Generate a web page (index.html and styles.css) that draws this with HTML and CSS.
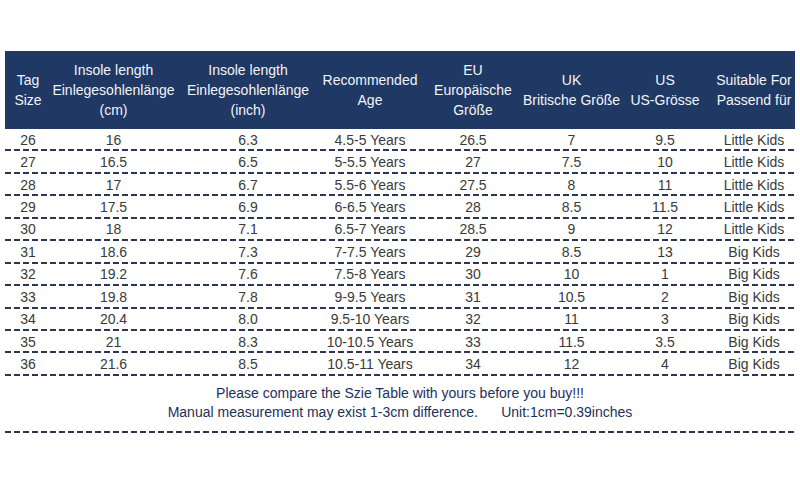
FILE: index.html
```html
<!DOCTYPE html>
<html>
<head>
<meta charset="utf-8">
<link rel="stylesheet" href="styles.css">
</head>
<body>
<div class="page">
  <div class="chart">
    <div class="row head">
      <div>Tag<br>Size</div>
      <div>Insole length<br>Einlegesohlenlänge<br>(cm)</div>
      <div>Insole length<br>Einlegesohlenlänge<br>(inch)</div>
      <div>Recommended<br>Age</div>
      <div>EU<br>Europäische<br>Größe</div>
      <div>UK<br>Britische Größe</div>
      <div>US<br>US-Grösse</div>
      <div>Suitable For<br>Passend für</div>
    </div>
    <div class="row"><div>26</div><div>16</div><div>6.3</div><div>4.5-5 Years</div><div>26.5</div><div>7</div><div>9.5</div><div>Little Kids</div></div>
    <div class="row"><div>27</div><div>16.5</div><div>6.5</div><div>5-5.5 Years</div><div>27</div><div>7.5</div><div>10</div><div>Little Kids</div></div>
    <div class="row"><div>28</div><div>17</div><div>6.7</div><div>5.5-6 Years</div><div>27.5</div><div>8</div><div>11</div><div>Little Kids</div></div>
    <div class="row"><div>29</div><div>17.5</div><div>6.9</div><div>6-6.5 Years</div><div>28</div><div>8.5</div><div>11.5</div><div>Little Kids</div></div>
    <div class="row"><div>30</div><div>18</div><div>7.1</div><div>6.5-7 Years</div><div>28.5</div><div>9</div><div>12</div><div>Little Kids</div></div>
    <div class="row"><div>31</div><div>18.6</div><div>7.3</div><div>7-7.5 Years</div><div>29</div><div>8.5</div><div>13</div><div>Big Kids</div></div>
    <div class="row"><div>32</div><div>19.2</div><div>7.6</div><div>7.5-8 Years</div><div>30</div><div>10</div><div>1</div><div>Big Kids</div></div>
    <div class="row"><div>33</div><div>19.8</div><div>7.8</div><div>9-9.5 Years</div><div>31</div><div>10.5</div><div>2</div><div>Big Kids</div></div>
    <div class="row"><div>34</div><div>20.4</div><div>8.0</div><div>9.5-10 Years</div><div>32</div><div>11</div><div>3</div><div>Big Kids</div></div>
    <div class="row"><div>35</div><div>21</div><div>8.3</div><div>10-10.5 Years</div><div>33</div><div>11.5</div><div>3.5</div><div>Big Kids</div></div>
    <div class="row"><div>36</div><div>21.6</div><div>8.5</div><div>10.5-11 Years</div><div>34</div><div>12</div><div>4</div><div>Big Kids</div></div>
    <div class="note">
      <p>Please compare the Szie Table with yours before you buy!!!</p>
      <p class="pre">Manual measurement may exist 1-3cm difference.      Unit:1cm=0.39inches</p>
    </div>
  </div>
</div>
</body>
</html>
```
FILE: styles.css
```css
html, body {
  margin: 0;
  padding: 0;
  background: #ffffff;
}

.page {
  width: 800px;
  height: 500px;
  padding: 51px 5px 0 5px;
  box-sizing: border-box;
  font-family: "Liberation Sans", Arial, sans-serif;
}

.chart {
  width: 790px;
}

.row {
  display: grid;
  grid-template-columns: 46px 125px 144px 100px 106px 91px 96px 82px;
  align-items: center;
  text-align: center;
  height: 22.45px;
  box-sizing: border-box;
  padding-bottom: 1px;
  font-size: 14px;
  line-height: 16px;
  color: #3a3a3a;
  white-space: nowrap;
  background: repeating-linear-gradient(to right, #2e3550 0 6px, transparent 6px 9px) left bottom / 100% 2px no-repeat;
}

.row > div {
  display: flex;
  flex-direction: column;
  align-items: center;
}

.row.head {
  height: 78px;
  padding-bottom: 0;
  background: #203864;
  color: #f2f4f8;
  font-size: 14px;
  line-height: 20px;
}

.note {
  padding: 8px 0 9px;
  text-align: center;
  font-size: 14px;
  line-height: 19px;
  color: #1d2f5e;
  background: repeating-linear-gradient(to right, #2e3550 0 6px, transparent 6px 9px) left bottom / 100% 2px no-repeat;
  height: 57px;
  box-sizing: border-box;
}

.note p {
  margin: 0;
}

.pre {
  white-space: pre;
}
```
